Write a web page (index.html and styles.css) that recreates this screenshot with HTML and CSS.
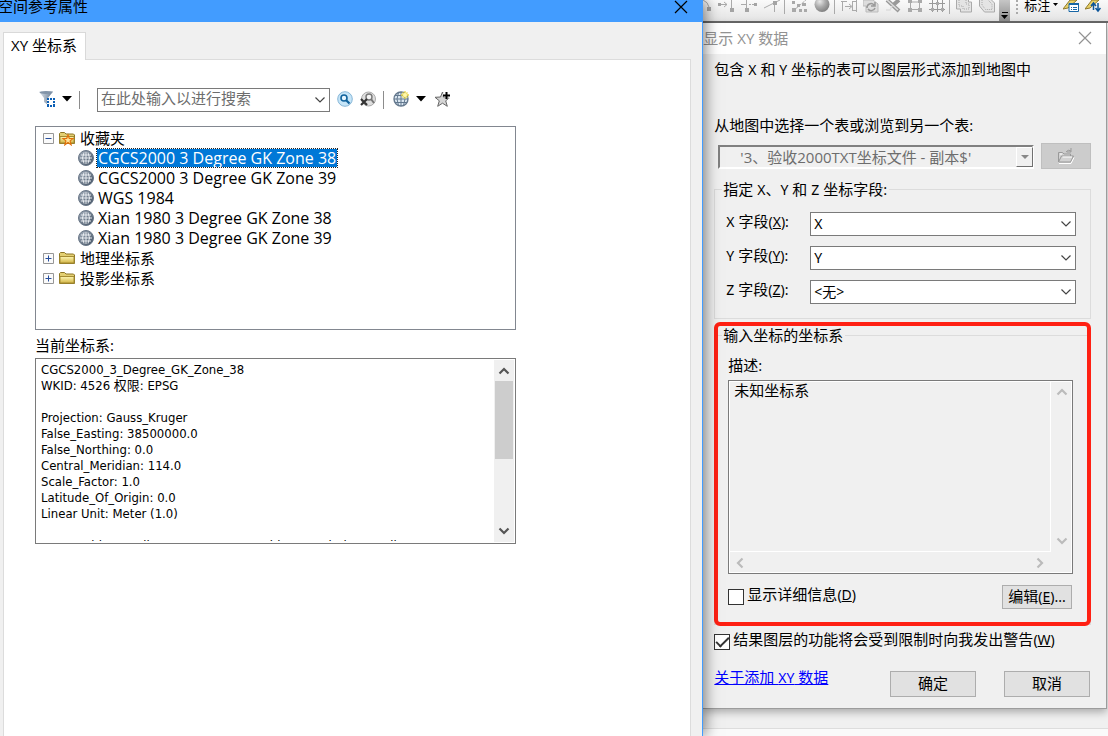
FILE: index.html
```html
<!DOCTYPE html>
<html lang="zh-CN">
<head>
<meta charset="utf-8">
<title>空间参考属性</title>
<link rel="stylesheet" href="styles.css">
</head>
<body>
<svg class="defs" aria-hidden="true">
  <defs>
    <radialGradient id="ball" cx="35%" cy="30%" r="75%"><stop offset="0" stop-color="#e8e8e8"/><stop offset=".5" stop-color="#aaa"/><stop offset="1" stop-color="#7d7d7d"/></radialGradient>
    <linearGradient id="globeFill" x1="0" y1="0" x2="1" y2="1"><stop offset="0" stop-color="#a4b0bd"/><stop offset="1" stop-color="#3f4d5f"/></linearGradient>
    <linearGradient id="folderFill" x1="0" y1="0" x2="0" y2="1"><stop offset="0" stop-color="#fdf6b4"/><stop offset="1" stop-color="#d3b545"/></linearGradient>
    <linearGradient id="funnelFill"><stop offset="0" stop-color="#dfe6ee"/><stop offset="1" stop-color="#63788f"/></linearGradient>
    <symbol id="globe" viewBox="0 0 16 16">
      <circle cx="8" cy="8" r="7.500" fill="url(#globeFill)" stroke="#697787"/>
      <path d="M8 2v12M2 8h12M3 5h10M3 11h10M6 2.500Q3 8 6 13.500M10 2.500Q13 8 10 13.500" fill="none" stroke="#f3f6f9" stroke-width=".9"/>
    </symbol>
    <symbol id="folder" viewBox="0 0 16 16">
      <path d="M.5 13.500v-10l1-1h4l1.500 1.500h7.500l1 1v8.500z" fill="#e3cf72" stroke="#8d7626"/>
      <path d="M1 6.500h14v6.500h-14z" fill="url(#folderFill)" stroke="#a58c33"/>
    </symbol>
    <symbol id="down" viewBox="0 0 12 8"><path d="M1.500 1.500l4.500 4.500 4.500-4.500" fill="none" stroke="#444" stroke-width="1.200"/></symbol>
    <symbol id="thick" viewBox="0 0 12 8"><path d="M1.500 1.500l4.500 4.500 4.500-4.500" fill="none" stroke="currentColor" stroke-width="2.200"/></symbol>
    <symbol id="close" viewBox="0 0 14 14"><path d="M1 1l12 12M13 1l-12 12" fill="none" stroke="currentColor" stroke-width="1.200"/></symbol>
    <symbol id="tri" viewBox="0 0 10 6"><path d="M0 0h10l-5 5.500z" fill="currentColor"/></symbol>
  </defs>
</svg>
<main class="desktop">
  <section class="window">
    <header class="window-title">
      <h1>空间参考属性</h1>
      <button class="close" aria-label="关闭"><svg><use href="#close"/></svg></button>
    </header>
    <div class="tabs" role="tablist"><button class="tab" role="tab" aria-selected="true">XY 坐标系</button></div>
    <div class="panel">
      <div class="tools">
        <button class="tool filter" aria-label="筛选">
          <svg class="i16" viewBox="0 0 16 16"><path d="M0 .5h14L9 7v7L5 11V7z" fill="url(#funnelFill)"/><ellipse cx="7" cy="1.500" rx="6.500" ry="1.400" fill="#8294a8"/><path d="M8 7h8v9H8z" fill="#fff"/><path d="M8 7h2v2H8zm3 0h2v2h-2zm3 0h2v2h-2zM8 10h2v2H8zm6 0h2v2h-2zM8 13h2v3H8zm3 1h2v2h-2zm3-1h2v3h-2z" fill="#0b5fb5"/></svg>
          <svg class="tri"><use href="#tri"/></svg>
        </button>
        <span class="line"></span>
        <div class="search">
          <input type="text" aria-label="搜索" placeholder="在此处输入以进行搜索">
          <svg class="arrow"><use href="#down"/></svg>
        </div>
        <button class="tool" aria-label="搜索"><svg class="i16" viewBox="0 0 16 16"><circle cx="8" cy="8" r="7.300" fill="#c6e5f8" stroke="#86b6d7"/><circle cx="7" cy="7" r="3" fill="#e6f6ff" stroke="#11639d" stroke-width="1.600"/><path d="M9 9l3.500 3.500" stroke="#11639d" stroke-width="2.200"/></svg></button>
        <button class="tool clear" aria-label="清除搜索"><svg class="i16" viewBox="0 0 16 16"><circle cx="8.500" cy="8" r="7" fill="#dedede" stroke="#aaa"/><circle cx="9" cy="6" r="3" fill="#f5f5f5" stroke="#777" stroke-width="1.400"/><path d="M11 8l3 4" stroke="#777" stroke-width="2"/><path d="M1 8l6 6M7 8l-6 6" stroke="#333" stroke-width="2.200"/></svg></button>
        <span class="line"></span>
        <button class="tool add" aria-label="添加坐标系"><svg class="i16" viewBox="0 0 16 16"><circle cx="8" cy="8" r="7" fill="#dce8f2" stroke="#65788d" stroke-width="1.400"/><path d="M8 1v14M1 8h14M2 4.500h12M2 11.500h12M5.500 1.500Q2.500 8 5.500 14.500M10.500 1.500Q13.500 8 10.500 14.500" fill="none" stroke="#62788f"/><path d="M12 0v8M8 4h8M9.500 1.500l5 5M14.500 1.500l-5 5" stroke="#ecd645" stroke-width="1.300"/><circle cx="12" cy="4" r="2" fill="#fff7ad"/></svg><svg class="tri"><use href="#tri"/></svg></button>
        <button class="tool add" aria-label="添加到收藏夹"><svg class="i16" viewBox="0 0 16 16"><path d="M7.500 1l2 5 5.500.3-4.300 3.500 1.600 5.500-4.800-3.100-4.800 3.100 1.600-5.500L0 6.300 5.500 6z" fill="#d5d5d5" stroke="#666"/><path d="M8 2h8v5.500H9z" fill="#fff"/><path d="M8 5l1.300 2h5" fill="none" stroke="#888"/><path d="M8 4.500h7M11.500 1v7" stroke="#000" stroke-width="2"/></svg></button>
      </div>
      <ul class="tree" role="tree">
        <li role="treeitem" aria-expanded="true">
          <div class="node"><svg class="box" viewBox="0 0 11 11"><path d="M.5.5h10v10H.5z" fill="#fafafa" stroke="#979797"/><path d="M2.500 5.500h6" stroke="#274e9c"/></svg><svg class="i16" viewBox="0 0 16 16"><use href="#folder"/><path d="M9 5l1.300 3.400 3.700.2-2.900 2.300 1 3.900L9 12.600 5.900 14.800l1-3.900L4 8.600l3.700-.2z" fill="#ffe59a" stroke="#e1700b" stroke-width="1.200"/></svg><span>收藏夹</span></div>
          <ul role="group">
            <li class="node leaf" role="treeitem" aria-selected="true"><svg class="i16"><use href="#globe"/></svg><span class="picked">CGCS2000 3 Degree GK Zone 38</span></li>
            <li class="node leaf" role="treeitem"><svg class="i16"><use href="#globe"/></svg><span>CGCS2000 3 Degree GK Zone 39</span></li>
            <li class="node leaf" role="treeitem"><svg class="i16"><use href="#globe"/></svg><span>WGS 1984</span></li>
            <li class="node leaf" role="treeitem"><svg class="i16"><use href="#globe"/></svg><span>Xian 1980 3 Degree GK Zone 38</span></li>
            <li class="node leaf" role="treeitem"><svg class="i16"><use href="#globe"/></svg><span>Xian 1980 3 Degree GK Zone 39</span></li>
          </ul>
        </li>
        <li class="node" role="treeitem" aria-expanded="false"><svg class="box" viewBox="0 0 11 11"><path d="M.5.5h10v10H.5z" fill="#fafafa" stroke="#979797"/><path d="M2.500 5.500h6M5.500 2.500v6" stroke="#274e9c"/></svg><svg class="i16"><use href="#folder"/></svg><span>地理坐标系</span></li>
        <li class="node" role="treeitem" aria-expanded="false"><svg class="box" viewBox="0 0 11 11"><path d="M.5.5h10v10H.5z" fill="#fafafa" stroke="#979797"/><path d="M2.500 5.500h6M5.500 2.500v6" stroke="#274e9c"/></svg><svg class="i16"><use href="#folder"/></svg><span>投影坐标系</span></li>
      </ul>
      <label class="current-label" for="current">当前坐标系:</label>
      <div class="current">
        <textarea id="current" readonly>CGCS2000_3_Degree_GK_Zone_38
WKID: 4526 权限: EPSG

Projection: Gauss_Kruger
False_Easting: 38500000.0
False_Northing: 0.0
Central_Meridian: 114.0
Scale_Factor: 1.0
Latitude_Of_Origin: 0.0
Linear Unit: Meter (1.0)

Geographic Coordinate System: GCS_China_Geodetic_Coordinate_System_2000</textarea>
        <div class="scroll"><svg class="arrow up"><use href="#thick"/></svg><div class="thumb"></div><svg class="arrow"><use href="#thick"/></svg></div>
      </div>
    </div>
  </section>

  <div class="side">
    <div class="appbar">
      <div class="icons">
        <svg class="half" viewBox="0 0 8 16"><path d="M0 0q5 2 6 7" fill="none" stroke="#aaa"/><path d="M4 7h4v4H4z" fill="#a4a4a4"/></svg>
        <svg class="i16" viewBox="0 0 16 16"><path d="M0 4.500h9M6 2l3 2.500L6 7M13.500 0v10" fill="none" stroke="#aaa"/><path d="M0 3h3v3H0zM12 8h4v4h-4z" fill="#a4a4a4"/></svg>
        <svg class="i16" viewBox="0 0 16 16"><path d="M0 4.500h6M5.500 0v10" fill="none" stroke="#aaa"/><path d="M8 4.500h6" stroke="#aaa" stroke-dasharray="2 1"/><path d="M13 3h3v3h-3zM4 8h4v4H4z" fill="#a4a4a4"/></svg>
        <svg class="i16" viewBox="0 0 16 16"><path d="M0 8L16 0M10.500 3v9" fill="none" stroke="#aaa"/><path d="M9 1h4v4H9z" fill="#a4a4a4"/></svg>
      </div>
      <div class="icons">
        <svg class="i16" viewBox="0 0 16 16"><path d="M2 11L15 0" stroke="#aaa" stroke-dasharray="3 1"/><path d="M1 8h4v4H1zM6 4h3v3H6zM1 1h3v3H1zM11 3h4v3h-4zM8 9h3v3H8zM13 9h3v3h-3z" fill="#a9a9a9"/></svg>
        <svg class="i16" viewBox="0 0 16 16"><circle cx="8" cy="4.500" r="7.500" fill="url(#ball)"/></svg>
      </div>
      <div class="icons tight">
        <svg class="i16" viewBox="0 0 16 16"><path d="M0 1.500h6M1.500 1v10M11.500 1v9M15.500 0v12M4 6.500h6M8 4l3 2.500L8 9M11 1.500h4M11 10.500h4" fill="none" stroke="#aaa"/></svg>
        <svg class="i16" viewBox="0 0 16 16"><path d="M0 0h10l5 4v8H3V6H0z" fill="#ddd" stroke="#bbb"/><path d="M4 8a4 4 0 0 1 7-3M12 2v4H8M12 8a4 4 0 0 1-7 1" fill="none" stroke="#999" stroke-width="1.500"/></svg>
        <svg class="i16" viewBox="0 0 16 16"><path d="M2 0l12 11M14 0L7 6" stroke="#999" stroke-width="4"/><path d="M1 10h4l2-4M2 0l11 10" fill="none" stroke="#ddd" stroke-width="1.500"/></svg>
        <svg class="i16" viewBox="0 0 16 16"><path d="M3 2h10M3 9.500h10M3.500 0v10M12.500 0v10" fill="none" stroke="#aaa"/><path d="M1 0h4v3H1zM11 0h4v3h-4zM1 8h4v4H1zM11 8h4v4h-4z" fill="#aaa"/></svg>
        <svg class="i16" viewBox="0 0 16 16"><path d="M0 3.500h16M0 9.500h16M3.500 0v12M8.500 0v12M13.500 0v12" stroke="#999"/><path d="M7 2h3v3H7zM2 8h3v3H2zM12 8h3v3h-3z" fill="#aaa"/></svg>
      </div>
      <div class="icons">
        <svg class="i16" viewBox="0 0 16 16"><path d="M.5 0v9h4v3h11V2h-3V0" fill="#e4e4e4" stroke="#aaa"/><path d="M3 0v6h4v3h6V4h-3V0" fill="none" stroke="#aaa" stroke-dasharray="1 1"/></svg>
        <svg class="i16" viewBox="0 0 16 16"><path d="M.5 0v6l5 6h10V3l-3-3" fill="#e4e4e4" stroke="#aaa"/><path d="M3 0v5l3.500 4.500H13V4L9 0" fill="none" stroke="#aaa" stroke-dasharray="1 1"/></svg>
      </div>
      <button class="more" aria-label="更多"><svg viewBox="0 0 7 8"><path d="M1 .5h6" stroke="#000"/><path d="M0 3h7L3.500 7z"/></svg></button>
      <span class="grip"></span>
      <button class="label-menu">标注<svg class="tiny" viewBox="0 0 5 4"><path d="M0 0h5L2.500 3z"/></svg></button>
      <svg class="i16" viewBox="0 0 16 16"><path d="M0 9L7 0h7L5 8z" fill="#e9d169" stroke="#8f7a2a"/><path d="M6 3.500h9.500v8H6z" fill="#fff" stroke="#1766a5"/><path d="M6 3h10v2H6z" fill="#1766a5"/><path d="M8 7.500h1M8 9.500h1M10 7.500h4M10 9.500h4" stroke="#1766a5"/></svg>
      <svg class="i16 last" viewBox="0 0 16 16"><path d="M0 9L7 0h7L5 8z" fill="#e9d169" stroke="#8f7a2a"/><path d="M8.500 10V3M6 6l2.500-3L11 6M13 3v8M10.500 8l2.500 3 2.500-3" fill="none" stroke="#0d569a" stroke-width="1.500"/></svg>
    </div>

    <form class="dialog">
      <header class="dialog-title"><h2>显示 XY 数据</h2><button type="button" class="close" aria-label="关闭"><svg><use href="#close"/></svg></button></header>
      <div class="dialog-body">
        <p>包含 <span class="la">X</span> 和 <span class="la">Y</span> 坐标的表可以图层形式添加到地图中</p>
        <label class="source-label" for="source">从地图中选择一个表或浏览到另一个表:</label>
        <div class="source-row">
          <div class="source">
            <select id="source" disabled><option>'3、验收2000TXT坐标文件 - 副本$'</option></select>
            <span class="drop"><svg viewBox="0 0 8 5"><path d="M0 0h8L4 4z" fill="#888"/></svg></span>
          </div>
          <button type="button" class="browse" disabled aria-label="浏览"><svg viewBox="0 0 18 16"><path d="M1.500 14V4.500h4L7 6h6.500v2M1.500 14l3-6h12l-3 6H2" fill="#d2d2d2" stroke="#999"/><path d="M9 4q2-3 5-1M14 0v4h-4" fill="none" stroke="#999"/><path d="M2 15.500h12l3-6M5.500 9h9.500M3 6h2" fill="none" stroke="#fff"/></svg></button>
        </div>
        <fieldset class="fields">
          <legend>指定 <span class="la">X</span>、<span class="la">Y</span> 和 <span class="la">Z</span> 坐标字段:</legend>
          <div class="field"><label for="fx"><span class="la">X</span> 字段<span class="la">(<u>X</u>):</span></label><div class="pick"><select id="fx"><option>X</option></select><svg class="arrow"><use href="#down"/></svg></div></div>
          <div class="field"><label for="fy"><span class="la">Y</span> 字段<span class="la">(<u>Y</u>):</span></label><div class="pick"><select id="fy"><option>Y</option></select><svg class="arrow"><use href="#down"/></svg></div></div>
          <div class="field"><label for="fz"><span class="la">Z</span> 字段<span class="la">(<u>Z</u>):</span></label><div class="pick"><select id="fz"><option>&lt;无&gt;</option></select><svg class="arrow"><use href="#down"/></svg></div></div>
        </fieldset>
        <div class="marked">
          <fieldset class="system">
            <legend>输入坐标的坐标系</legend>
            <label for="desc">描述:</label>
            <div class="desc">
              <textarea id="desc" readonly>未知坐标系</textarea>
              <div class="vbar"><svg class="arrow up"><use href="#thick"/></svg><svg class="arrow"><use href="#thick"/></svg></div>
              <div class="hbar"><svg class="arrow left"><use href="#thick"/></svg><svg class="arrow right"><use href="#thick"/></svg></div>
            </div>
            <div class="detail">
              <label class="check"><input type="checkbox"><span>显示详细信息<span class="la">(<u>D</u>)</span></span></label>
              <button type="button" class="btn edit">编辑<span class="la">(<u>E</u>)...</span></button>
            </div>
          </fieldset>
          <div class="mark"></div>
        </div>
        <label class="check warn"><input type="checkbox" checked><span>结果图层的功能将会受到限制时向我发出警告<span class="la">(<u>W</u>)</span></span></label>
        <footer class="actions">
          <a href="#about">关于添加 <span class="la">XY</span> 数据</a>
          <button type="button" class="btn">确定</button>
          <button type="button" class="btn">取消</button>
        </footer>
      </div>
    </form>
    <div class="status"></div>
  </div>
</main>
</body>
</html>
```

FILE: styles.css
```css
* { box-sizing: border-box; }
body {
  margin: 0;
  font: 15px/20px "Open Sans", "Noto Sans CJK SC", sans-serif;
  color: #000;
  background: #f0f0f0;
}
button, input, select, textarea { font: inherit; color: inherit; margin: 0; }
button { border: 0; padding: 0; background: none; }
h1, h2, p, ul { margin: 0; padding: 0; font-size: 15px; font-weight: 400; list-style: none; }
svg { display: block; flex: none; }
.defs { position: absolute; width: 0; height: 0; }
.i16 { width: 16px; height: 16px; }
.arrow { width: 12px; height: 8px; }
.up { transform: rotate(180deg); }
.left { transform: rotate(90deg); }
.right { transform: rotate(-90deg); }
.la { font-family: "Noto Sans", sans-serif; font-size: 14px; line-height: 14px; }

.desktop { display: flex; height: 100vh; overflow: hidden; }

/* Spatial reference window */
.window {
  flex: 703 1 0;
  min-width: 0;
  display: flex;
  flex-direction: column;
  position: relative;
  z-index: 1;
  background: #f0f0f0;
  border-right: 1px solid #429cff;
  box-shadow: 2px 0 14px rgba(0, 0, 0, .5);
}
.window-title {
  display: flex;
  justify-content: space-between;
  height: 22px;
  padding-right: 14px;
  background: #429cff;
}
.window-title h1 { line-height: 12px; text-indent: -2px; }
.close svg { width: 14px; height: 14px; }
.window-title .close { height: 12px; }
.tabs { display: flex; padding: 10px 0 0 3px; }
.tab {
  height: 28px;
  padding: 0 8px 4px 7px;
  background: #fff;
  border: 1px solid #d9d9d9;
  border-bottom: 0;
  margin-bottom: -1px;
  position: relative;
}
.panel {
  flex: 1;
  margin: 0 11px 0 3px;
  padding: 28px 174px 0 31px;
  background: #fff;
  border: 1px solid #dcdcdc;
  border-bottom: 0;
}
.tools { display: flex; align-items: center; gap: 7px; height: 24px; padding-left: 4px; margin-bottom: 14px; }
.tool { display: flex; align-items: center; gap: 7px; }
.tool svg { margin-bottom: 2px; }
.add { margin-left: 2px; }
.tri { width: 10px; height: 6px; }
.line { width: 1px; height: 18px; background: #8c8c8c; }
.search { position: relative; width: 233px; margin-left: 10px; }
.search input {
  display: block;
  width: 100%;
  height: 24px;
  padding: 0 24px 4px 3px;
  border: 1px solid #7a7a7a;
  background: #fff;
}
.search input::placeholder { color: #6d6d6d; opacity: 1; }
.search .arrow, .pick .arrow { position: absolute; right: 4px; top: 8px; pointer-events: none; }

.tree { height: 204px; padding: 1px 7px; border: 1px solid #828790; }
.node { display: flex; align-items: center; height: 20px; }
.node span { margin-left: 4px; padding: 0 1px; line-height: 18px; }
.box { width: 11px; height: 11px; margin-right: 5px; }
.leaf { padding-left: 35px; font-size: 16px; }
.leaf span { margin-left: 3px; }
.node .picked { background: #0078d7; color: #fff; outline: 1px dotted #222; }
.current-label { display: block; margin: 5px 0 3px; }
.current { display: flex; height: 186px; border: 1px solid #7a7a7a; padding: 1px; }
.current textarea {
  flex: 1;
  min-width: 0;
  margin-bottom: 1px;
  padding: 2px 4px 0;
  border: 0;
  resize: none;
  overflow: hidden;
  white-space: pre;
  background: #fff;
  font: 13px/16px "DejaVu Sans Condensed", "Noto Sans CJK SC", sans-serif;
}
.scroll { width: 20px; padding: 7px 0; display: flex; flex-direction: column; align-items: center; background: #f0f0f0; color: #555; }
.thumb { width: 18px; height: 78px; margin: 6px 0 auto; background: #cdcdcd; }

/* Application behind the dialog */
.side { flex: 405 1 0; min-width: 0; display: flex; flex-direction: column; background: #f0f0f0; }
.appbar {
  display: flex;
  height: 23px;
  overflow: hidden;
  background: linear-gradient(#fafafa, #e4e4e4);
  border-bottom: 2px solid #6a6a6a;
}
.icons { display: flex; flex: none; gap: 7px; margin-right: 4px; }
.icons + .icons { height: 14px; padding-left: 6px; border-left: 1px solid #aaa; }
.tight { gap: 6px; }
.half { width: 8px; height: 16px; }
.more { flex: none; width: 11px; padding: 11px 2px 0; background: linear-gradient(#c6c6c6, #8c8c8c); }
.more svg { width: 7px; height: 8px; }
.grip { flex: none; width: 2px; height: 14px; margin: 0 6px; background: repeating-linear-gradient(#aaa 0 2px, transparent 2px 4px); }
.label-menu { display: flex; align-items: center; flex: none; gap: 3px; height: 10px; margin-right: 5px; font-size: 13px; }
.tiny { width: 5px; height: 4px; }
.last { margin-left: 6px; }

/* Show XY data dialog */
.dialog { background: #f0f0f0; border: 1px solid #9c9c9c; border-width: 0 1px 1px 0; margin-right: 1px; box-shadow: 0 3px 8px rgba(0, 0, 0, .3); }
.dialog-title { display: flex; align-items: center; justify-content: space-between; height: 31px; padding: 0 14px 2px 0; background: #fff; color: #929292; }
.dialog-body { padding: 5px 15px 11px 11px; }
.source-label { display: block; margin-top: 36px; }
.source-row { display: flex; align-items: flex-end; gap: 7px; margin-top: 8px; padding-left: 4px; }
.source { position: relative; flex: 1; min-width: 0; }
.source select {
  appearance: none;
  display: block;
  width: 100%;
  height: 24px;
  padding: 0 20px 2px;
  border: 2px solid #707070;
  border-color: #808080 #fff #fff #808080;
  border-radius: 0;
  background: #f0f0f0;
  color: #6d6d6d;
  opacity: 1;
}
.drop {
  position: absolute;
  right: 1px;
  top: 2px;
  display: grid;
  place-items: center;
  width: 17px;
  height: 20px;
  background: #f0f0f0;
  border: 1px solid #fff;
  border-right-color: #707070;
  border-bottom-color: #707070;
}
.drop svg { width: 8px; height: 5px; }
.browse { display: grid; place-items: center; width: 50px; height: 26px; background: #ccc; border: 1px solid #bfbfbf; }
.browse svg { width: 18px; height: 16px; }
fieldset { min-width: 0; margin: 0; border: 1px solid #dcdcdc; }
legend { padding: 0 2px 0 1px; }
.fields { display: grid; gap: 10px; margin-top: 10px; padding: 13px 14px 14px 7px; }
.field { display: grid; grid-template-columns: 84px 1fr; padding-left: 4px; }
.field label { height: 20px; line-height: 18px; }
.pick { position: relative; }
.pick select {
  appearance: none;
  display: block;
  width: 100%;
  height: 24px;
  padding: 0 3px;
  border: 1px solid #7a7a7a;
  border-radius: 0;
  background: #fff;
  font-family: "Noto Sans", "Noto Sans CJK SC", sans-serif;
  font-size: 14px;
}
.marked { position: relative; margin-top: 6px; }
.system { padding: 10px 17px 15px 7px; }
.mark { position: absolute; inset: -3px 0 -1px; border: 4px solid #ff2013; border-radius: 6px; pointer-events: none; }
.system > label, .desc, .detail { margin-left: 6px; }
.system > label { display: block; }
.desc {
  display: grid;
  grid-template: 1fr 21px / 1fr 21px;
  height: 194px;
  margin-top: 5px;
  border: 1px solid #7a7a7a;
  outline: 1px solid #fff;
  outline-offset: -2px;
  color: #bbb;
}
.desc textarea { border: solid #fff; border-width: 0 1px 1px 0; padding: 0 5px; line-height: 18px; background: #f0f0f0; color: #000; resize: none; overflow: hidden; }
.vbar { display: flex; flex-direction: column; justify-content: space-between; align-items: center; padding: 7px 0; }
.hbar { display: flex; justify-content: space-between; align-items: center; padding: 0 5px; }
.detail { display: flex; justify-content: space-between; margin-top: 11px; padding-right: 1px; }
.check { display: flex; align-items: flex-end; gap: 3px; }
.check > span { padding-bottom: 1px; }
.check input {
  appearance: none;
  display: grid;
  place-items: center;
  flex: none;
  width: 16px;
  height: 16px;
  border: 1px solid #333;
  background: #fff;
}
.check input:checked::before { content: ""; width: 11px; height: 5px; border: solid #333; border-width: 0 0 2px 2px; transform: translateY(-2px) rotate(-45deg); }
.detail .check { height: 20px; }
.warn { margin-top: 4px; }
.btn { width: 86px; height: 26px; padding-bottom: 2px; background: #e1e1e1; border: 1px solid #adadad; }
.edit { width: 70px; height: 24px; line-height: 20px; }
.actions { display: flex; align-items: flex-start; gap: 28px; margin-top: 21px; padding-right: 1px; }
.actions a { margin-right: auto; line-height: 12px; color: #00f; }
.status { flex: 1; margin-top: 19px; border-top: 1px solid #ddd; background: #fafafa; }
```
